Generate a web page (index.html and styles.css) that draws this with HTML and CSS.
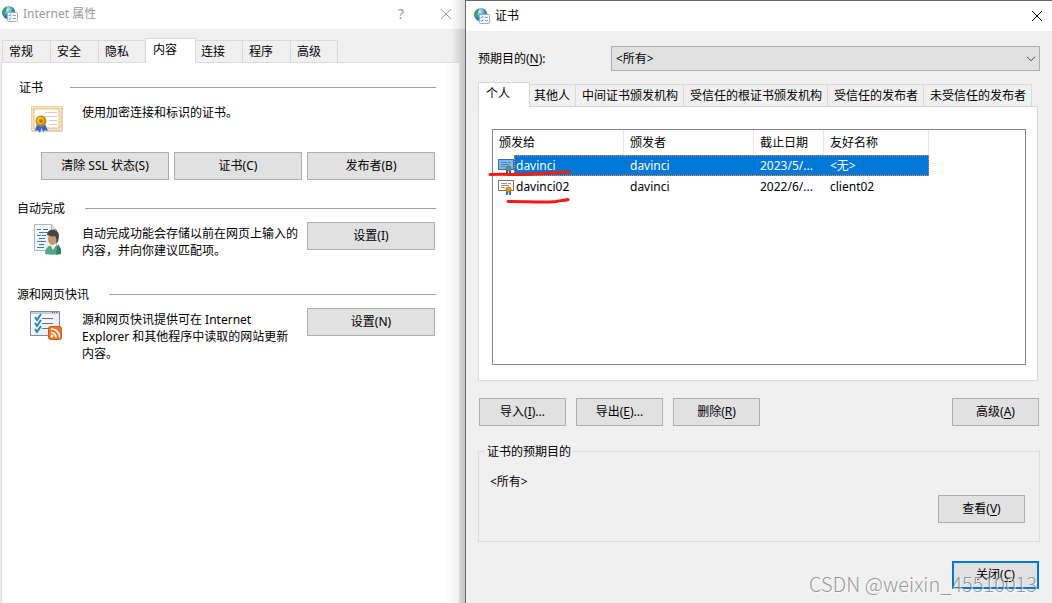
FILE: index.html
```html
<!DOCTYPE html>
<html lang="zh-CN">
<head>
<meta charset="utf-8">
<title>Internet 属性 - 证书</title>
<link rel="stylesheet" href="styles.css">
</head>
<body>
<svg class="defs" width="0" height="0" aria-hidden="true">
  <defs>
    <radialGradient id="sea" cx="0.4" cy="0.25" r="0.85"><stop offset="0" stop-color="#d5f2ff"/><stop offset="0.4" stop-color="#4aa3e6"/><stop offset="1" stop-color="#12397c"/></radialGradient>
    <linearGradient id="paper" x1="0" y1="0" x2="1" y2="1"><stop offset="0" stop-color="#ffffff"/><stop offset="1" stop-color="#e4e9ef"/></linearGradient>
    <symbol id="globe" viewBox="0 0 16 16">
      <circle cx="6.700" cy="6.700" r="6.600" fill="url(#sea)"/>
      <path d="M.5 5C1 3 2.500 1.300 4.500.7L5.500 2 4 3.500 4.500 5 2.800 6.500 3 8.500 1 8.500C.2 7.500.1 6 .5 5zM9 .7C11.200 1.400 12.800 3 13.200 5.500L11.500 5.500 10 4 10.300 2.500zM3 11.500L4.500 10 5 13C4.200 12.800 3.500 12.300 3 11.500z" fill="#3f9f52"/>
      <rect x="5.500" y="6.500" width="10" height="9" rx="1" fill="#f8fafc" stroke="#a3adb7"/>
      <path d="M6.800 9.200l.8.8 1.500-2M6.800 12.700l.8.8 1.500-2" fill="none" stroke="#2587c8"/>
      <path d="M10.500 9.500h3.500M10.500 12.500h3.500" stroke="#9aa5b0"/>
    </symbol>
    <symbol id="cert" viewBox="0 0 16 16">
      <rect class="cert-frame" x=".5" y="1.500" width="15" height="10"/>
      <path class="cert-text" d="M3 4.500h6M10 4.500h3M3 6.500h8M3 8.500h4"/>
      <path class="cert-ribbon" d="M8 11h2v5H8zM11 11h2v5h-2z"/>
      <circle class="cert-seal" cx="10.500" cy="10.500" r="2.500"/>
    </symbol>
  </defs>
</svg>

<div class="desktop">
  <section class="window window-back" aria-label="Internet 属性">
    <header class="titlebar">
      <svg class="app-icon"><use href="#globe"/></svg>
      <h1 class="title">Internet 属性</h1>
      <button class="caption-btn help" aria-label="帮助">?</button>
      <button class="caption-btn" aria-label="关闭"><svg width="12" height="12" viewBox="0 0 12 12"><path d="M1 1l10 10M11 1L1 11" fill="none" stroke="currentColor"/></svg></button>
    </header>
    <nav class="tabs tabs-back" role="tablist">
      <button class="tab" role="tab">常规</button>
      <button class="tab" role="tab">安全</button>
      <button class="tab" role="tab">隐私</button>
      <button class="tab active" role="tab" aria-selected="true">内容</button>
      <button class="tab" role="tab">连接</button>
      <button class="tab" role="tab">程序</button>
      <button class="tab" role="tab">高级</button>
    </nav>
    <main class="panel panel-back">
      <section class="group group-cert">
        <h2 class="group-title">证书</h2>
        <div class="group-body">
          <svg class="group-icon" width="32" height="28" viewBox="0 0 32 28">
            <rect x="1" y="2" width="31" height="25" rx="1" fill="#d5d5d5"/>
            <rect x=".5" y="1.500" width="30" height="24" fill="#fff6e4" stroke="#edcf9b"/>
            <rect x="2.500" y="3.500" width="26" height="20" fill="none" stroke="#dfa95a" stroke-width="2" stroke-dasharray="1 1"/>
            <rect x="4" y="5" width="23" height="17" fill="#fffdf9"/>
            <path d="M14 7.500h12M14 11.500h12M18 15.500h8M18 19.500h8" stroke="#cfcfcf"/>
            <path d="M6 19l-2 7 3-1 2 3 2-7zM10 20l2 7 2-2 3 1-3-7z" fill="#2866dd"/>
            <circle cx="10" cy="16" r="5.500" fill="#c88a08"/>
            <circle cx="9.500" cy="15.500" r="3.500" fill="#f2c23a"/>
            <circle cx="10" cy="16" r="2" fill="#b47804"/>
          </svg>
          <p class="group-text">使用加密连接和标识的证书。</p>
        </div>
        <div class="btn-row">
          <button class="btn">清除 SSL 状态(S)</button>
          <button class="btn">证书(C)</button>
          <button class="btn">发布者(B)</button>
        </div>
      </section>
      <section class="group">
        <h2 class="group-title">自动完成</h2>
        <div class="group-body">
          <svg class="group-icon group-icon-user" width="32" height="32" viewBox="0 0 32 32">
            <path d="M3.500 1.500h17l5 5v21h-22z" fill="url(#paper)" stroke="#aeb6be"/>
            <path d="M20.500 1.500v5h5" fill="#dde3e8" stroke="#aeb6be"/>
            <path d="M6 6.500h4M12 6.500h5M8 9.500h9M6 12.500h4M11 12.500h4M8 15.500h6M6 18.500h9M8 21.500h5M6 24.500h7" stroke="#4277b8"/>
            <path d="M14 31c0-6 3-8 7-9h4c4 1 5 4 5 9-5 1-11 1-16 0z" fill="#58a586"/>
            <path d="M19 21l3 6 4-6z" fill="#f4f6f5"/>
            <ellipse cx="21.500" cy="16" rx="4.500" ry="6" fill="#c49a75"/>
            <path d="M16 12c0-7 12-7 12 1l-1 6-2 1c1-3 0-5-1-7-3 1-5 0-8-1z" fill="#484744"/>
            <path d="M27 21l3 5v5l-5 .5z" fill="#347e62"/>
          </svg>
          <p class="group-text">自动完成功能会存储以前在网页上输入的<br>内容，并向你建议匹配项。</p>
          <button class="btn">设置(I)</button>
        </div>
      </section>
      <section class="group">
        <h2 class="group-title">源和网页快讯</h2>
        <div class="group-body">
          <svg class="group-icon group-icon-feed" width="32" height="32" viewBox="0 0 32 32">
            <path d="M.5 1.500h29v24h-29z" fill="url(#paper)" stroke="#7f8e9b"/>
            <path d="M1 2h28v2H1z" fill="#c3ced8"/><path d="M22 2.500h6" stroke="#586878" stroke-dasharray="1 1"/>
            <path d="M12 8.500h11M12 13.500h11M12 18.500h7" stroke="#716f91"/>
            <path d="M5 7l2 3 4-6M5 13l2 3 4-6M5 19l2 3 4-6" fill="none" stroke="#238ac6" stroke-width="2"/>
            <rect x="18.500" y="16.500" width="13" height="13" rx="2" fill="#ee7725" stroke="#d35414"/>
            <circle cx="22" cy="26" r="1.500" fill="#fff"/>
            <path d="M21 22.500a5 5 0 0 1 5 5M21 19a8 8 0 0 1 8.500 8.500" fill="none" stroke="#fff" stroke-width="1.700"/>
          </svg>
          <p class="group-text">源和网页快讯提供可在 Internet<br>Explorer 和其他程序中读取的网站更新<br>内容。</p>
          <button class="btn">设置(N)</button>
        </div>
      </section>
    </main>
  </section>

  <section class="window window-front" aria-label="证书">
    <header class="titlebar">
      <svg class="app-icon"><use href="#globe"/></svg>
      <h1 class="title">证书</h1>
      <button class="caption-btn" aria-label="关闭"><svg width="12" height="12" viewBox="0 0 12 12"><path d="M1 1l10 10M11 1L1 11" fill="none" stroke="currentColor"/></svg></button>
    </header>
    <main class="dialog">
      <div class="purpose">
        <label for="purpose">预期目的(<u>N</u>):</label>
        <div class="select-box">
          <select id="purpose"><option>&lt;所有&gt;</option></select>
          <svg class="chevron" width="10" height="6" viewBox="0 0 10 6"><path d="M1 .8l4 4 4-4" fill="none" stroke="#444"/></svg>
        </div>
      </div>
      <nav class="tabs tabs-front" role="tablist">
        <button class="tab active" role="tab" aria-selected="true">个人</button>
        <button class="tab" role="tab">其他人</button>
        <button class="tab" role="tab">中间证书颁发机构</button>
        <button class="tab" role="tab">受信任的根证书颁发机构</button>
        <button class="tab" role="tab">受信任的发布者</button>
        <button class="tab" role="tab">未受信任的发布者</button>
      </nav>
      <div class="panel panel-front">
        <div class="list">
          <table class="certs">
            <thead>
              <tr><th class="col-subject">颁发给</th><th class="col-issuer">颁发者</th><th class="col-date">截止日期</th><th class="col-alias">友好名称</th></tr>
            </thead>
            <tbody>
              <tr class="selected"><td class="subject"><div class="subject-line"><svg class="cert-icon"><use href="#cert"/></svg><span class="subject-name">davinci</span></div></td><td>davinci</td><td>2023/5/...</td><td>&lt;无&gt;</td></tr>
              <tr><td class="subject"><div class="subject-line"><svg class="cert-icon"><use href="#cert"/></svg><span class="subject-name">davinci02</span></div></td><td>davinci</td><td>2022/6/...</td><td>client02</td></tr>
            </tbody>
          </table>
          <svg class="marks" width="84" height="36" viewBox="0 0 84 36" aria-hidden="true"><path d="M3 5.500C20 5 35 6 46 5S70 4 82 3M21 32.500C35 32 55 34 69 32.500C74 31 77 32 81 30.500" fill="none" stroke="#fb1a10" stroke-width="3" stroke-linecap="round"/></svg>
        </div>
      </div>
      <div class="actions">
        <button class="btn">导入(<u>I</u>)...</button>
        <button class="btn">导出(<u>E</u>)...</button>
        <button class="btn">删除(<u>R</u>)</button>
        <button class="btn push">高级(<u>A</u>)</button>
      </div>
      <fieldset class="details">
        <legend>证书的预期目的</legend>
        <p class="details-text">&lt;所有&gt;</p>
        <button class="btn push">查看(<u>V</u>)</button>
      </fieldset>
      <footer class="footer">
        <button class="btn btn-default push">关闭(<u>C</u>)</button>
      </footer>
    </main>
  </section>
  <span class="watermark">CSDN @weixin_45510013</span>
</div>
</body>
</html>
```

FILE: styles.css
```css
* { box-sizing: border-box; }

body {
  margin: 0;
  background: #f0f0f0;
  color: #000;
  font: 12px/17px "Noto Sans", "Noto Sans CJK SC", sans-serif;
}

h1, h2, p { margin: 0; font-size: 12px; font-weight: 400; }
button, select { font: inherit; color: inherit; }
u { text-underline-offset: 2px; }
.defs { display: block; }

.desktop {
  position: relative;
  display: grid;
  grid-template-columns: 465fr 587fr;
  min-height: 100vh;
  overflow: hidden;
}

/* Windows */
.window { display: flex; flex-direction: column; min-width: 0; }
.window-back { background: linear-gradient(to right, #f0f0f0 97%, #c4c4c4); }
.window-front { border: solid #6b696b; border-width: 1px 0 0 1px; background: #f0f0f0; }

.titlebar { display: flex; align-items: center; height: 29px; background: #fff; }
.window-back .titlebar {
  padding: 0 12px 2px 2px;
  background: linear-gradient(to right, #fff 97%, #dcdcdc);
  color: #999;
}
.window-front .titlebar { height: 30px; padding: 0 8px 1px; }
.app-icon { width: 16px; height: 16px; margin-right: 5px; flex: none; }
.title { flex: 1; }
.caption-btn {
  display: flex;
  justify-content: center;
  width: 14px;
  padding: 0;
  border: 0;
  background: none;
}
.help { margin-right: 31px; font-size: 14px; }

/* Tabs */
.tabs { display: flex; align-items: flex-end; }
.tabs-back { height: 34px; padding-left: 2px; }
.tab {
  height: 23px;
  padding: 0 0 1px 6px;
  border: 1px solid #d9d9d9;
  border-right-width: 0;
  background: #f0f0f0;
  text-align: left;
  white-space: nowrap;
}
.tab:last-child { border-right-width: 1px; }
.tab.active {
  position: relative;
  height: 25px;
  padding: 0 0 3px 7px;
  border-right-width: 1px;
  border-bottom: 0;
  background: #fff;
}
.tab.active + .tab { border-left-width: 0; }
.tabs-back .tab { width: 48px; }
.tabs-back .tab.active { width: 51px; margin-left: -1px; }
.tabs-back .tab.active + .tab { width: 46px; padding-left: 5px; }
.tabs-front { margin-top: 11px; }
.tabs-front .tab { padding: 0 5px 0 6px; }
.tabs-front .tab.active { width: 52px; padding: 0 0 3px 7px; }
.tabs-front .tab.active + .tab { padding-left: 4px; }

/* Panels */
.panel { border: 1px solid #dcdcdc; background: #fff; }
.tabs + .panel { margin-top: -1px; }
.panel-back {
  flex: 1;
  margin: 0 5px 0 1px;
  padding: 15px 23px 0 15px;
  border-bottom: 0;
  background: linear-gradient(to right, #fff 97%, #f0f0f0);
}
.panel-front { margin-right: 2px; padding: 22px 11px 15px 13px; }

/* Groups */
.group { margin-bottom: 26px; }
.group-cert { margin-bottom: 19px; }
.group-title { display: flex; align-items: center; gap: 20px; height: 18px; }
.group-cert .group-title { gap: 27px; padding-left: 2px; }
.group-title::after { content: ""; flex: 1; height: 1px; background: #a0a0a0; }
.group-body {
  display: grid;
  grid-template-columns: 65px 1fr 128px;
  align-items: start;
  margin-top: 5px;
  padding-right: 1px;
}
.group-icon { margin-left: 14px; }
.group-icon-user { margin-top: 1px; }
.group-icon-feed { margin: 2px 0 0 13px; }
.group-text { padding-top: 3px; white-space: nowrap; }
.group-cert .group-body { margin-top: 8px; }
.group-cert .group-icon { margin-top: 1px; }
.group-cert .group-text { padding-top: 0; }
.btn-row { display: flex; gap: 5px; margin-top: 19px; padding: 0 1px 0 24px; }
.btn-row .btn { flex: 1; }

.btn {
  height: 28px;
  padding: 0 0 1px;
  border: 1px solid #adadad;
  background: #e1e1e1;
  white-space: nowrap;
}
.window-front .btn { width: 87px; }
.window-front .btn-default { border: 2px solid #0078d7; }
.push { margin-left: auto; }

/* Certificate dialog */
.dialog { padding: 15px 12px 14px; }
.purpose { display: grid; grid-template-columns: 133px 1fr; align-items: center; }
.select-box { position: relative; }
.select-box select {
  display: block;
  width: 100%;
  height: 25px;
  padding: 0 4px;
  border: 1px solid #adadad;
  border-radius: 0;
  background: #e1e1e1;
  appearance: none;
}
.chevron { position: absolute; right: 4px; top: 10px; pointer-events: none; }

.list { position: relative; height: 236px; border: 1px solid #828790; }
.certs { width: 436px; border-collapse: separate; border-spacing: 0; table-layout: fixed; }
.certs th {
  height: 25px;
  padding: 0 6px;
  border-right: 1px solid #e5e5e5;
  font-weight: 400;
  text-align: left;
}
.col-subject { width: 131px; }
.col-issuer { width: 130px; }
.col-date { width: 70px; }
.certs td { height: 21px; padding: 0 6px; white-space: nowrap; }
.certs td.subject { padding: 0 0 0 5px; }
.subject-line { display: flex; align-items: center; height: 21px; }
.subject-name { flex: 1; padding: 1px 0 1px 2px; }
.cert-icon { width: 16px; height: 16px; flex: none; }

.cert-icon {
  --frame: #8e7557;
  --fill: #fff;
  --lines: #8f91c9;
  --seal: #e8a215;
  --rim: #a8700a;
  --ribbon: #2f6fd0;
}
.selected .cert-icon {
  --frame: #47708d;
  --fill: #7bb9eb;
  --lines: #4a86cf;
  --seal: #6f9080;
  --rim: #4f7468;
  --ribbon: #1a65c4;
}
.cert-frame { fill: var(--fill); stroke: var(--frame); }
.cert-text { fill: none; stroke: var(--lines); }
.cert-ribbon { fill: var(--ribbon); }
.cert-seal { fill: var(--seal); stroke: var(--rim); }

.selected td { background: #0078d7; border: dotted #ff8728; border-width: 1px 0; color: #fff; }
.selected td:last-child { border-right-width: 1px; }
.certs .selected td.subject { background: none; border: 0; }
.selected .subject-name {
  height: 21px;
  padding: 1px 0 1px 1px;
  border: dotted #ff8728;
  border-width: 1px 0 1px 1px;
  background: #0078d7;
}
.marks { position: absolute; left: -6px; top: 39px; }

.actions { display: flex; gap: 10px; margin-top: 17px; padding: 0 1px; }

.details {
  display: flex;
  flex-direction: column;
  margin: 17px 0 0;
  padding: 13px 14px 18px 11px;
  border: 1px solid #dcdcdc;
  min-width: 0;
}
.details legend { margin-left: -5px; padding: 0 2px; }
.details-text { margin-bottom: 5px; }
.footer { display: flex; margin-top: 19px; padding-right: 1px; }

.watermark {
  position: absolute;
  right: 15px;
  bottom: 7px;
  color: rgba(120, 120, 120, 0.75);
  font: 300 20px/24px "Noto Sans CJK SC", sans-serif;
  text-shadow: 1px 1px 0 rgba(255, 255, 255, 0.7);
  pointer-events: none;
}
```
